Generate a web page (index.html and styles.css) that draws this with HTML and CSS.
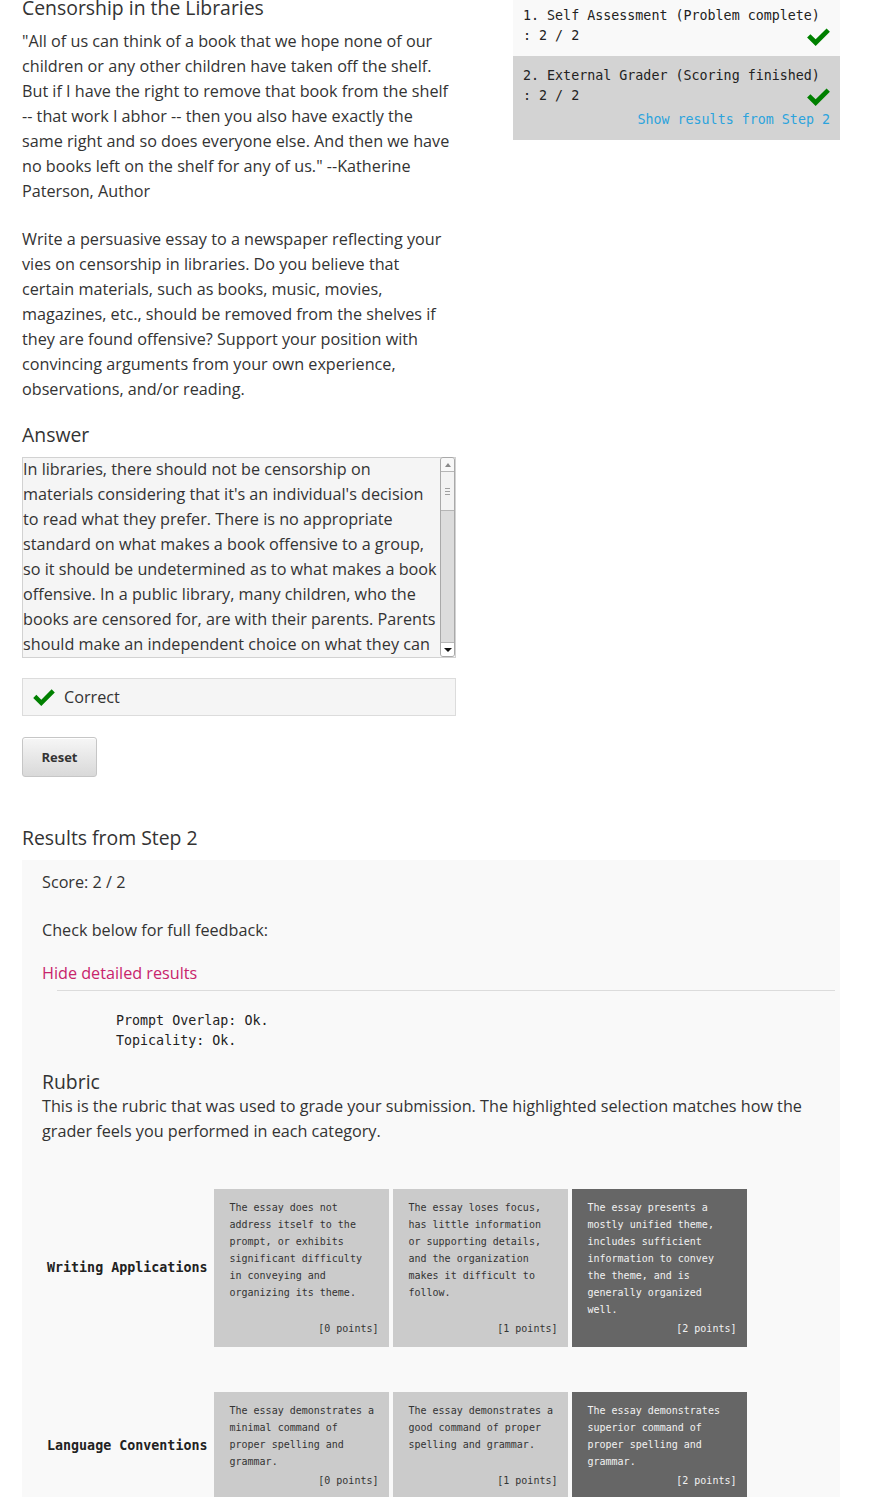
FILE: index.html
```html
<!DOCTYPE html>
<html lang="en">
<head>
<meta charset="utf-8">
<title>Censorship in the Libraries</title>
<link rel="stylesheet" href="styles.css">
</head>
<body>
<div class="page">
  <div class="top">
    <div class="main-col">
      <h3 class="title">Censorship in the Libraries</h3>
      <div class="prompt">
        <p>"All of us can think of a book that we hope none of our children or any other children have taken off the shelf. But if I have the right to remove that book from the shelf -- that work I abhor -- then you also have exactly the same right and so does everyone else. And then we have no books left on the shelf for any of us." --Katherine Paterson, Author</p>
        <p>Write a persuasive essay to a newspaper reflecting your vies on censorship in libraries. Do you believe that certain materials, such as books, music, movies, magazines, etc., should be removed from the shelves if they are found offensive? Support your position with convincing arguments from your own experience, observations, and/or reading.</p>
      </div>
      <h3 class="answer-label">Answer</h3>
      <div class="answer">
        <div class="answer-text">In libraries, there should not be censorship on materials considering that it's an individual's decision to read what they prefer. There is no appropriate standard on what makes a book offensive to a group, so it should be undetermined as to what makes a book offensive. In a public library, many children, who the books are censored for, are with their parents. Parents should make an independent choice on what they can</div>
        <div class="scrollbar">
          <div class="sb-btn sb-up"></div>
          <div class="sb-track"><div class="sb-thumb"></div></div>
          <div class="sb-btn sb-down"></div>
        </div>
      </div>
      <div class="status">
        <svg class="check check-sm" viewBox="0 0 24 20"><polygon points="0,11 3.5,7.5 9,13 20.5,1.5 24,5 9,20"/></svg>
        <span>Correct</span>
      </div>
      <button class="reset" type="button">Reset</button>
    </div>
    <div class="side-col">
      <div class="step step-light">
        <div>1. Self Assessment (Problem complete)</div>
        <div class="step-row">
          <span>: 2 / 2</span>
          <svg class="check" viewBox="0 0 24 20"><polygon points="0,11 3.5,7.5 9,13 20.5,1.5 24,5 9,20"/></svg>
        </div>
      </div>
      <div class="step step-gray">
        <div>2. External Grader (Scoring finished)</div>
        <div class="step-row">
          <span>: 2 / 2</span>
          <svg class="check" viewBox="0 0 24 20"><polygon points="0,11 3.5,7.5 9,13 20.5,1.5 24,5 9,20"/></svg>
        </div>
        <a class="step-link" href="#results">Show results from Step 2</a>
      </div>
    </div>
  </div>

  <h3 class="results-title" id="results">Results from Step 2</h3>
  <div class="results">
    <p class="score">Score: 2 / 2</p>
    <p class="check-below">Check below for full feedback:</p>
    <a class="hide-link" href="#results">Hide detailed results</a>
    <hr class="feedback-hr">
    <pre class="feedback">Prompt Overlap: Ok.
Topicality: Ok.</pre>
    <h3 class="rubric-title">Rubric</h3>
    <p class="rubric-desc">This is the rubric that was used to grade your submission. The highlighted selection matches how the grader feels you performed in each category.</p>
    <div class="rubric">
      <div class="rubric-label">Writing Applications</div>
      <div class="cell">
        <div class="cell-text">The essay does not address itself to the prompt, or exhibits significant difficulty in conveying and organizing its theme.</div>
        <div class="cell-points">[0 points]</div>
      </div>
      <div class="cell">
        <div class="cell-text">The essay loses focus, has little information or supporting details, and the organization makes it difficult to follow.</div>
        <div class="cell-points">[1 points]</div>
      </div>
      <div class="cell selected">
        <div class="cell-text">The essay presents a mostly unified theme, includes sufficient information to convey the theme, and is generally organized well.</div>
        <div class="cell-points">[2 points]</div>
      </div>

      <div class="rubric-label">Language Conventions</div>
      <div class="cell">
        <div class="cell-text">The essay demonstrates a minimal command of proper spelling and grammar.</div>
        <div class="cell-points">[0 points]</div>
      </div>
      <div class="cell">
        <div class="cell-text">The essay demonstrates a good command of proper spelling and grammar.</div>
        <div class="cell-points">[1 points]</div>
      </div>
      <div class="cell selected">
        <div class="cell-text">The essay demonstrates superior command of proper spelling and grammar.</div>
        <div class="cell-points">[2 points]</div>
      </div>
    </div>
  </div>
</div>
</body>
</html>
```

FILE: styles.css
```css
html, body {
  margin: 0;
  padding: 0;
  background: #fff;
}

body {
  font-family: "Open Sans", "DejaVu Sans", sans-serif;
  font-size: 16.2px;
  line-height: 25px;
  color: #333;
}

.page {
  margin-top: -4px;
  padding-left: 22px;
  width: 818px;
}

.top {
  display: flex;
  gap: 57px;
}

.main-col {
  width: 434px;
  flex: none;
}

.side-col {
  width: 327px;
  flex: none;
}

h3 {
  font-size: 19.4px;
  line-height: 23px;
  font-weight: 400;
  margin: 0;
  color: #333;
}

.title {
  margin-bottom: 10px;
}

.prompt {
  max-width: 430px;
}

.prompt p {
  margin: 0 0 23px;
}

.prompt p:last-child {
  margin-bottom: 21px;
}

.answer-label {
  margin-bottom: 11px;
}

.answer {
  display: flex;
  box-sizing: border-box;
  height: 201px;
  border: 1px solid #d2d2d2;
  background: #f5f5f5;
}

.answer-text {
  flex: 1;
  overflow: hidden;
  padding: 0;
  margin-top: -1px;
  color: #333;
}

.scrollbar {
  width: 15px;
  flex: none;
  box-sizing: border-box;
  border: 1px solid #a9a9a9;
  border-radius: 3px;
  display: flex;
  flex-direction: column;
  background: #dcdcdc;
  margin-top: -1px;
  overflow: hidden;
}

.sb-btn {
  height: 13px;
  flex: none;
  background: #f8f8f8;
  display: flex;
  align-items: center;
  justify-content: center;
}

.sb-up {
  border-bottom: 1px solid #b5b5b5;
}

.sb-up::before {
  content: "";
  border-left: 3.5px solid transparent;
  border-right: 3.5px solid transparent;
  border-bottom: 4px solid #8a8a8a;
}

.sb-down {
  background: #fff;
  border-top: 1px solid #b5b5b5;
}

.sb-down::before {
  content: "";
  border-left: 4px solid transparent;
  border-right: 4px solid transparent;
  border-top: 4px solid #111;
}

.sb-track {
  flex: 1;
  background: #dcdcdc;
}

.sb-thumb {
  height: 38px;
  background: #f3f3f3;
  border-bottom: 1px solid #b5b5b5;
  display: flex;
  align-items: center;
  justify-content: center;
}

.sb-thumb::before {
  content: "";
  width: 5px;
  height: 7px;
  background: repeating-linear-gradient(to bottom, #a0a0a0 0, #a0a0a0 1px, transparent 1px, transparent 3px);
}

.status {
  margin-top: 20px;
  box-sizing: border-box;
  height: 38px;
  border: 1px solid #dcdcdc;
  background: #f5f5f5;
  display: flex;
  align-items: center;
  padding: 0 10px;
  gap: 9px;
}

.check {
  width: 23px;
  height: 19px;
  fill: #008000;
  flex: none;
}

.check-sm {
  width: 22px;
  height: 18px;
}

.reset {
  display: block;
  margin-top: 21px;
  height: 40px;
  width: 75px;
  padding: 0;
  border: 1px solid #c6c6c6;
  border-radius: 3px;
  background: linear-gradient(to bottom, #f6f6f6, #d9d9d9);
  box-shadow: inset 0 1px 0 #fff;
  font-family: "Open Sans", "DejaVu Sans", sans-serif;
  font-size: 13px;
  font-weight: 700;
  color: #333;
}

/* right column */
.step {
  font-family: "DejaVu Sans Mono", "Liberation Mono", monospace;
  font-size: 13.33px;
  line-height: 20px;
  color: #222;
  padding: 10px 10px 9px;
}

.step-light {
  background: #f9f9f9;
}

.step-gray {
  background: #d3d3d3;
}

.step-row {
  display: flex;
  justify-content: space-between;
  align-items: flex-start;
}

.step-row .check {
  margin-top: 1px;
  margin-bottom: 1px;
}

.step-link {
  display: block;
  text-align: right;
  color: #2ba3dd;
  text-decoration: none;
  margin: 3px 0 1px;
}

/* results */
.results-title {
  margin-top: 49px;
  margin-bottom: 11px;
}

.results {
  background: #f9f9f9;
  padding: 10px 20px 20px;
}

.results p {
  margin: 0;
}

.score {
  margin-bottom: 23px !important;
}

.check-below {
  margin-bottom: 18px !important;
}

.hide-link {
  display: block;
  color: #c8246c;
  text-decoration: none;
}

.feedback-hr {
  border: 0;
  border-top: 1px solid #dcdcdc;
  height: 0;
  margin: 4px -15px 0 15px;
}

.feedback {
  margin: 20px 0 0 74px;
  font-family: "DejaVu Sans Mono", "Liberation Mono", monospace;
  font-size: 13.33px;
  line-height: 20px;
  color: #222;
}

.rubric-title {
  margin-top: 19px;
  margin-bottom: 1px;
}

.rubric {
  display: grid;
  grid-template-columns: auto 175px 175px 175px;
  justify-content: start;
  column-gap: 4px;
  row-gap: 45px;
  margin-top: 45px;
  padding-left: 5px;
}

.rubric-label {
  align-self: center;
  font-family: "DejaVu Sans Mono", "Liberation Mono", monospace;
  font-size: 13.33px;
  font-weight: 700;
  line-height: 20px;
  color: #222;
  padding-right: 3px;
  white-space: nowrap;
}

.cell {
  display: flex;
  flex-direction: column;
  background: #cbcbcb;
  padding: 10px 11px 10px 15px;
  font-family: "DejaVu Sans Mono", "Liberation Mono", monospace;
  font-size: 10px;
  line-height: 17px;
  color: #333;
}

.cell.selected {
  background: #666;
  color: #f2f2f2;
}

.cell-points {
  margin-top: auto;
  padding-top: 2px;
  text-align: right;
}
```
